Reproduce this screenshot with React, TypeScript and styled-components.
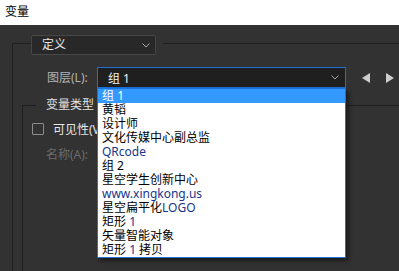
import React from "react";
import styled, { createGlobalStyle } from "styled-components";

const GlobalStyle = createGlobalStyle`
  html, body {
    margin: 0;
    padding: 0;
    background: #323232;
    overflow: hidden;
  }
  body {
    font-family: "Noto Sans", "Noto Sans CJK SC", sans-serif;
    font-size: 12px;
  }
`;

const Window = styled.div`
  width: 399px;
  height: 271px;
  display: flex;
  flex-direction: column;
  overflow: hidden;
`;

const TitleBar = styled.div`
  height: 25px;
  flex: none;
  background: #ffffff;
  color: #000000;
  padding-left: 5px;
  line-height: 24px;
  font-size: 12px;
`;

const Body = styled.div`
  flex: 1;
  background: #323232;
  overflow: hidden;
`;

const OuterGroup = styled.fieldset`
  margin: 6px 0 0 12px;
  padding: 0;
  width: 420px;
  height: 300px;
  border: 1px solid #1f1f1f;
  min-inline-size: 0;
`;

const OuterLegend = styled.legend`
  margin-left: 18px;
  padding: 4px 7px 0 0;
`;

const ModeSelect = styled.div`
  box-sizing: border-box;
  width: 125px;
  height: 20px;
  background: #282828;
  border: 1px solid #474747;
  border-radius: 2px;
  display: flex;
  align-items: center;
  justify-content: space-between;
  padding: 0 5px 0 10px;
  color: #e6e6e6;
  line-height: 18px;
`;

const LayerRow = styled.div`
  display: flex;
  align-items: center;
  margin-top: 12px;
  padding-left: 34px;
  height: 21px;
`;

const FieldLabel = styled.span<{ $dim?: boolean }>`
  width: 50px;
  flex: none;
  color: ${(p) => (p.$dim ? "#6b6b6b" : "#b2b2b2")};
  line-height: 16px;
  white-space: nowrap;
`;

const LayerSelectWrap = styled.div`
  position: relative;
  width: 249px;
  height: 21px;
`;

const LayerSelect = styled.div`
  box-sizing: border-box;
  width: 100%;
  height: 100%;
  background: #1f1f1f;
  border: 1px solid #1b6fd6;
  display: flex;
  align-items: center;
  justify-content: space-between;
  padding: 0 6px 0 10px;
  color: #f2f2f2;
`;

const Popup = styled.ul`
  position: absolute;
  top: 21px;
  left: 0;
  box-sizing: border-box;
  width: 249px;
  margin: 0;
  padding: 0;
  list-style: none;
  background: #ffffff;
  border: 1px solid #1c72d8;
  box-shadow: 3px 3px 4px rgba(0, 0, 0, 0.45);
  z-index: 5;
`;

const Option = styled.li<{ $active?: boolean }>`
  height: 14px;
  line-height: 14px;
  padding-left: 4px;
  white-space: nowrap;
  background: ${(p) => (p.$active ? "#3399ff" : "transparent")};
  color: ${(p) => (p.$active ? "#ffffff" : "#000000")};
`;

const Latin = styled.span<{ $active?: boolean }>`
  color: ${(p) => (p.$active ? "#ffffff" : "#17358a")};
`;

const Steppers = styled.div`
  display: flex;
  align-items: center;
  gap: 16px;
  margin-left: 16px;
`;

const InnerGroup = styled.fieldset`
  margin: 9px 0 0 9px;
  padding: 0;
  width: 420px;
  height: 300px;
  border: 1px solid #1f1f1f;
  min-inline-size: 0;
`;

const InnerLegend = styled.legend`
  margin-left: 13px;
  padding: 0 6px 0 10px;
  line-height: 16px;
  color: #e2e2e2;
`;

const CheckRow = styled.label`
  display: flex;
  align-items: center;
  gap: 9px;
  margin-top: 8px;
  padding-left: 9px;
  height: 16px;
  color: #e6e6e6;
`;

const CheckBox = styled.span`
  box-sizing: border-box;
  width: 12px;
  height: 12px;
  border: 1px solid #8c8c8c;
  border-radius: 1px;
`;

const NameRow = styled.div`
  display: flex;
  align-items: center;
  margin-top: 10px;
  padding-left: 23px;
  height: 16px;
`;

const Chevron = () => (
  <svg width="8" height="5" viewBox="0 0 8 5">
    <path d="M0.5 0.5 L4 4 L7.5 0.5" fill="none" stroke="#a8a8a8" strokeWidth="1" />
  </svg>
);

const ArrowLeft = () => (
  <svg width="8" height="10" viewBox="0 0 8 10">
    <polygon points="8,0 8,10 0,5" fill="#cdcdcd" />
  </svg>
);

const ArrowRight = () => (
  <svg width="8" height="10" viewBox="0 0 8 10">
    <polygon points="0,0 0,10 8,5" fill="#cdcdcd" />
  </svg>
);

const layers: { cjk?: string; latin?: string; tail?: string }[] = [
  { cjk: "组 ", latin: "1" },
  { cjk: "黄韬" },
  { cjk: "设计师" },
  { cjk: "文化传媒中心副总监" },
  { latin: "QRcode" },
  { cjk: "组 2" },
  { cjk: "星空学生创新中心" },
  { latin: "www.xingkong.us" },
  { cjk: "星空扁平化", latin: "LOGO" },
  { cjk: "矩形 ", latin: "1" },
  { cjk: "矢量智能对象" },
  { cjk: "矩形 ", latin: "1", tail: " 拷贝" },
];

export default function App() {
  return (
    <>
      <GlobalStyle />
      <Window>
        <TitleBar>变量</TitleBar>
        <Body>
          <OuterGroup>
            <OuterLegend>
              <ModeSelect>
                定义
                <Chevron />
              </ModeSelect>
            </OuterLegend>
            <LayerRow>
              <FieldLabel>图层(L):</FieldLabel>
              <LayerSelectWrap>
                <LayerSelect>
                  组 1
                  <Chevron />
                </LayerSelect>
                <Popup>
                  {layers.map((l, i) => (
                    <Option key={i} $active={i === 0}>
                      {l.cjk}
                      {l.latin && <Latin $active={i === 0}>{l.latin}</Latin>}
                      {l.tail}
                    </Option>
                  ))}
                </Popup>
              </LayerSelectWrap>
              <Steppers>
                <ArrowLeft />
                <ArrowRight />
              </Steppers>
            </LayerRow>
            <InnerGroup>
              <InnerLegend>变量类型</InnerLegend>
              <CheckRow>
                <CheckBox />
                可见性(V)
              </CheckRow>
              <NameRow>
                <FieldLabel $dim>名称(A):</FieldLabel>
              </NameRow>
            </InnerGroup>
          </OuterGroup>
        </Body>
      </Window>
    </>
  );
}
